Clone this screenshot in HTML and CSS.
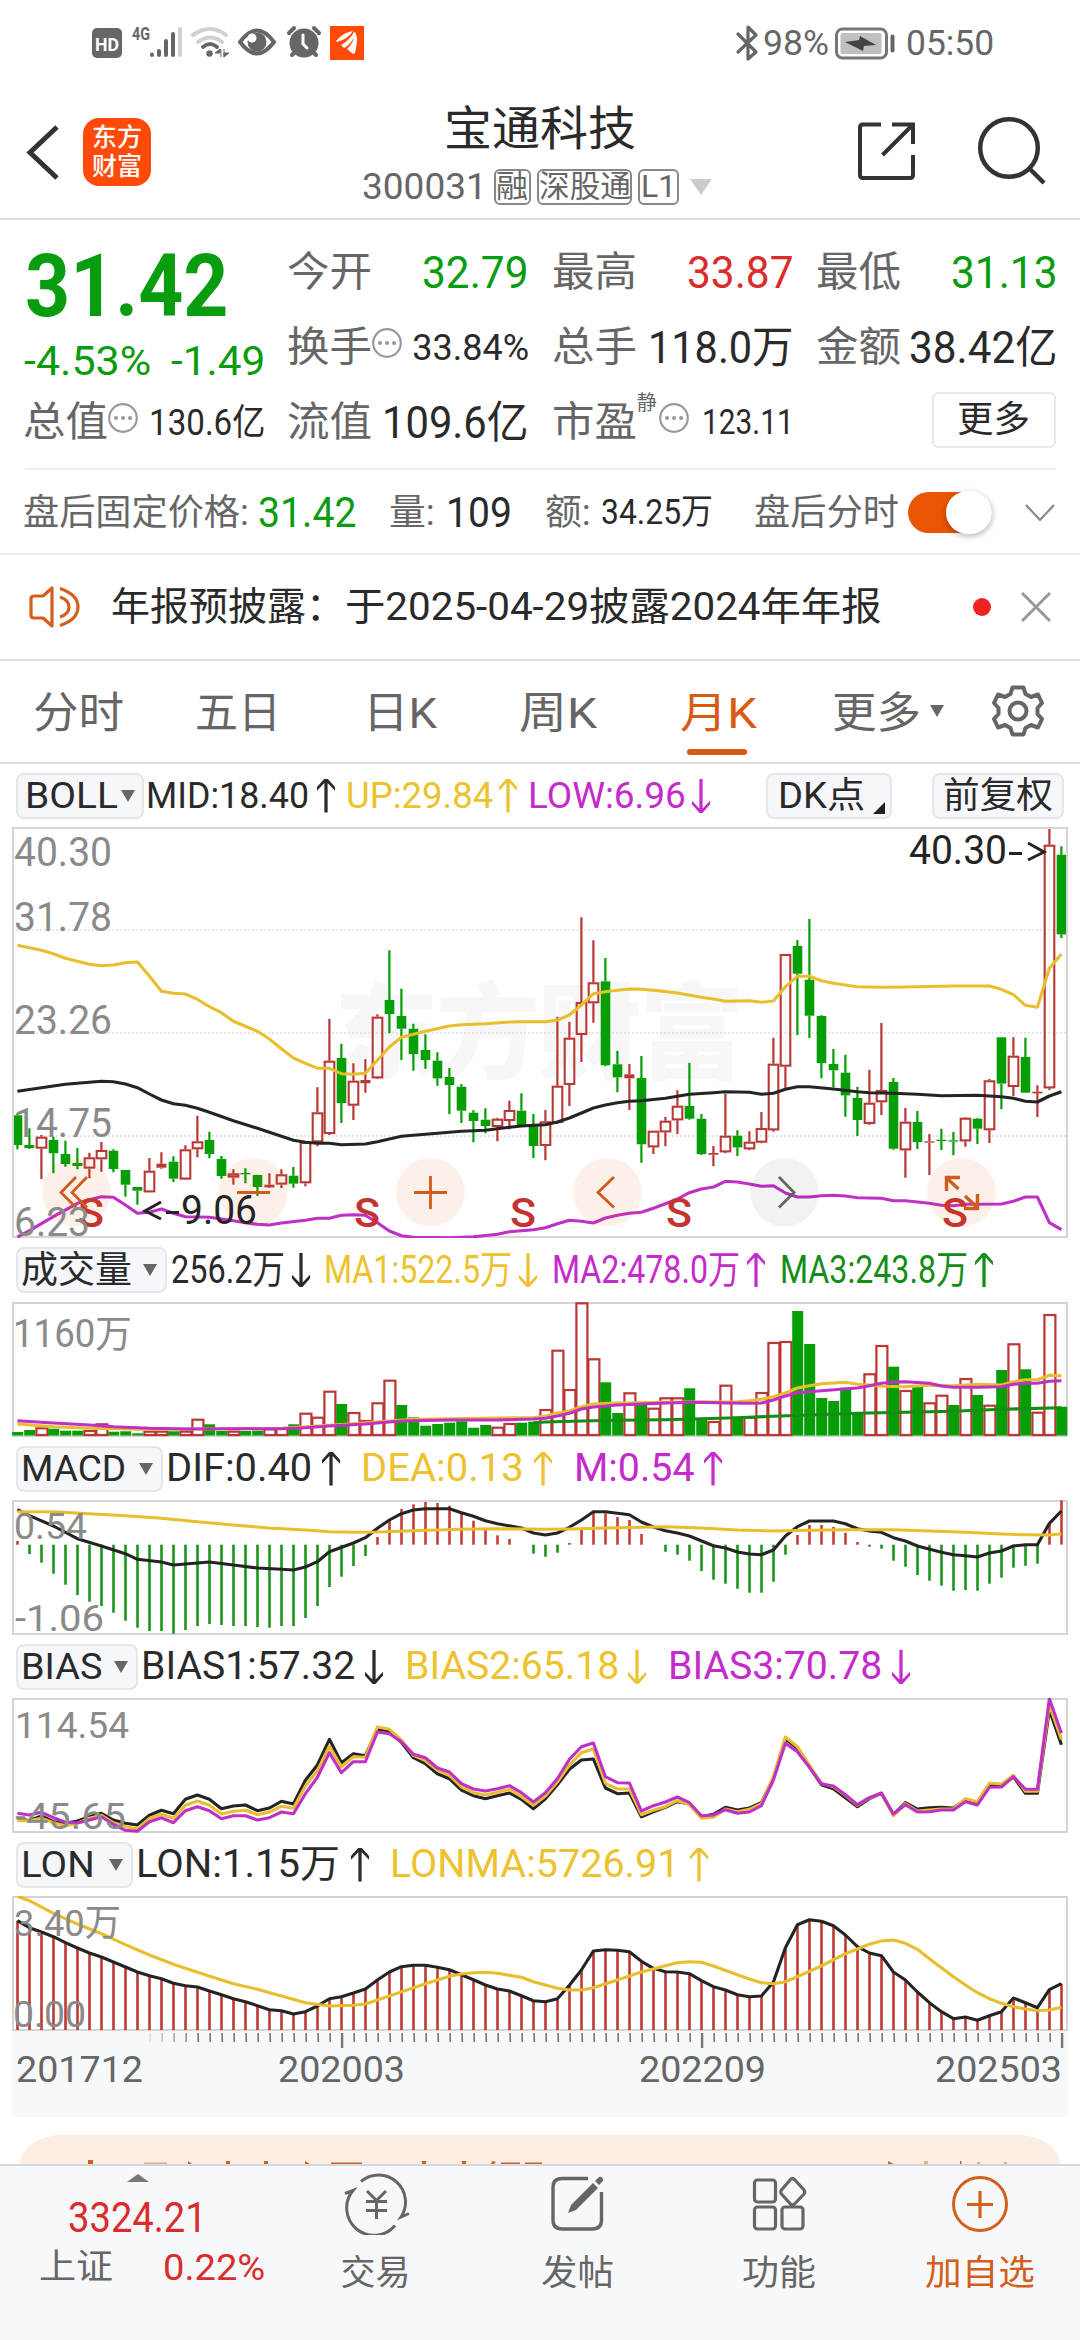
FILE: index.html
```html
<!DOCTYPE html>
<html lang="zh-CN">
<head>
<meta charset="utf-8">
<title>宝通科技 300031</title>
<link rel="stylesheet" href="styles.css">
</head>
<body>
<div class="screen">
  <header class="status">
    <svg class="status-left" width="280" height="46" viewBox="88 20 280 46">
      <rect x="92" y="28" width="30" height="30" rx="5" fill="#666"/>
      <text x="95" y="50.500" font-size="19" font-weight="700" fill="#fff" textLength="24" lengthAdjust="spacingAndGlyphs">HD</text>
      <text x="132" y="40" font-size="18" font-weight="700" fill="#666" textLength="18" lengthAdjust="spacingAndGlyphs">4G</text>
      <g stroke="#666" stroke-width="4" stroke-linecap="round"><path d="M152 54.500v.5M159 51v4M166 41v14M173 34v21"/><path d="M180 29v26" stroke="#d0d0d0"/></g>
      <g fill="none" stroke-width="4" stroke-linecap="round"><path d="M193 35q17-12 33 0M198 42q12-9 24 0" stroke="#d0d0d0"/><path d="M203 47q7-6 14 0" stroke="#666"/></g>
      <circle cx="209.500" cy="53.500" r="3.200" fill="#666"/><path d="M221 49v8M215 53l5-4v4zM224 49v8M224 53h5l-5 4z" fill="#666" stroke="#666" stroke-width="1"/>
      <path d="M240 42q17-23 34 0q-17 23-34 0z" fill="none" stroke="#666" stroke-width="4" stroke-linejoin="round"/>
      <circle cx="257" cy="42" r="9.500" fill="#666"/><circle cx="252" cy="38" r="4.500" fill="#fff"/>
      <g fill="none" stroke="#666" stroke-width="4" stroke-linecap="round"><circle cx="304" cy="43" r="12.500" fill="#666"/><path d="M289 33l5-5M319 33l-5-5M292 55l3-3M316 55l-3-3"/><path d="M303 35v9l4 4" stroke="#fff" stroke-width="3"/></g>
      <rect x="330" y="26" width="34" height="34" fill="#ff4a0a"/>
      <path d="M336 41q8-9 17-10q-5 8-16 11zM341 45q9-5 13-13l2 1q-4 11-12 15zM347 49q6-5 8-15q4 1 0 19l-2 1z" fill="#fff"/>
    </svg>
    <div class="status-right">
      <svg width="24" height="38" viewBox="735 23 24 38"><path d="M738 33l18 18-8 7V26l8 8-18 17" fill="none" stroke="#666" stroke-width="3.200" stroke-linejoin="round" stroke-linecap="round"/></svg>
      <span class="fit s35" data-w="62" data-g="6">98%</span>
      <svg class="battery" width="62" height="34" viewBox="834 25 62 34"><rect x="836.500" y="28" width="50" height="29" rx="6" fill="#fff" stroke="#777" stroke-width="3"/><rect x="840.500" y="32" width="41" height="21" rx="2" fill="#c0c0c0"/><path d="M845 41l14-2 1-4 16 9-12 1-1 5z" fill="#444"/><rect x="890.500" y="33.500" width="4" height="18" rx="2" fill="#666"/></svg>
      <span class="fit s35" data-w="84" data-g="12">05:50</span>
    </div>
  </header>

  <nav class="nav">
    <svg class="back" width="36" height="60" viewBox="25 122 36 60"><path d="M57 127L30 152.500 57 178" fill="none" stroke="#333" stroke-width="5"/></svg>
    <div class="logo"><span>东方</span><span>财富</span></div>
    <div class="heading">
      <div class="name"><span class="fit s47" data-w="188">宝通科技</span></div>
      <div class="code"><span class="fit s37" data-w="121">300031</span><span class="tag t1"><span class="fit s31" data-w="28">融</span></span><span class="tag t2"><span class="fit s31" data-w="88">深股通</span></span><span class="tag t3"><span class="fit s31" data-w="31">L1</span></span><svg width="22" height="16"><path d="M0 0h22l-11 16z" fill="#ccc"/></svg></div>
    </div>
    <svg class="share" width="62" height="62" viewBox="856 122 62 62"><path d="M881 125.500H863q-3 0-3 3V176q0 3 3 3H910q3 0 3-3V156M892 125.500H913V145M912 126.500L882.500 156" fill="none" stroke="#333" stroke-width="4"/></svg>
    <svg class="search" width="74" height="74" viewBox="976 116 74 74"><circle cx="1009" cy="149" r="28.800" fill="none" stroke="#333" stroke-width="4.500"/><path d="M1029 169l15 15" stroke="#333" stroke-width="4.500"/></svg>
  </nav>

  <section class="quote">
    <div class="last green"><div class="price"><span class="fit s88" data-w="199">31.42</span></div>
      <div class="change"><span class="fit s40" data-w="123">-4.53%</span><span class="fit s40" data-w="90">-1.49</span></div></div>
    <div class="cell"><span class="fit s40 lab" data-w="81">今开</span><span class="fit s44 green" data-w="103">32.79</span></div>
    <div class="cell"><span class="fit s40 lab" data-w="81">最高</span><span class="fit s44 red" data-w="103">33.87</span></div>
    <div class="cell"><span class="fit s40 lab" data-w="81">最低</span><span class="fit s44 green" data-w="103">31.13</span></div>
    <div class="cell"><span class="fit s40 lab" data-w="81">换手</span><svg class="info" viewBox="0 0 30 30"><circle cx="15" cy="15" r="13.800"/><path d="M8 15h.1M15 15h.1M22 15h.1"/></svg><span class="fit s36" data-w="113">33.84%</span></div>
    <div class="cell"><span class="fit s40 lab" data-w="81">总手</span><span class="fit s42" data-w="142">118.0万</span></div>
    <div class="cell"><span class="fit s40 lab" data-w="81">金额</span><span class="fit s42" data-w="145">38.42亿</span></div>
    <div class="cell"><span class="fit s40 lab" data-w="81">总值</span><svg class="info" viewBox="0 0 30 30"><circle cx="15" cy="15" r="13.800"/><path d="M8 15h.1M15 15h.1M22 15h.1"/></svg><span class="fit s36" data-w="112">130.6亿</span></div>
    <div class="cell"><span class="fit s40 lab" data-w="81">流值</span><span class="fit s42" data-w="143">109.6亿</span></div>
    <div class="cell"><span class="fit s40 lab" data-w="81">市盈</span><span class="sup">静</span><svg class="info" viewBox="0 0 30 30"><circle cx="15" cy="15" r="13.800"/><path d="M8 15h.1M15 15h.1M22 15h.1"/></svg><span class="fit s34" data-w="88">123.11</span></div>
    <div class="cell end"><span class="more"><span class="fit s36" data-w="69">更多</span></span></div>
  </section>

  <section class="after">
    <span class="fit s36 lab" data-w="222">盘后固定价格:</span><span class="fit s41 green" data-w="95" data-g="13">31.42</span>
    <span class="fit s36 lab" data-w="42" data-g="36">量:</span><span class="fit s41" data-w="62" data-g="15">109</span>
    <span class="fit s36 lab" data-w="42" data-g="37">额:</span><span class="fit s35" data-w="108" data-g="14">34.25万</span>
    <span class="fit s36 lab" data-w="141" data-g="45">盘后分时</span>
    <span class="toggle"><i></i></span>
    <svg class="chev" width="30" height="20"><path d="M1 2l14 15L29 2" fill="none" stroke="#888" stroke-width="2.200"/></svg>
  </section>

  <section class="notice">
    <svg width="54" height="46" viewBox="28 583 54 46"><g fill="none" stroke="#d35f1b" stroke-width="3.200" stroke-linejoin="round"><path d="M52 587v38L43 617H34q-3 0-3-3V598q0-3 3-3H43z"/><path d="M60 587.500q18 6 18 18.500t-18 18.500M60 596q9 3 9 10t-9 10"/></g></svg>
    <span class="fit s39" data-w="230" data-g="31">年报预披露：</span><span class="fit s39" data-w="533" data-g="4">于2025-04-29披露2024年年报</span>
    <i class="dot"></i>
    <svg class="close" width="30" height="30"><path d="M1 1l28 28M29 1L1 29" stroke="#999" stroke-width="3"/></svg>
  </section>

  <section class="tabs">
    <span class="fit s43" data-w="87">分时</span><span class="fit s43" data-w="82" data-g="75">五日</span><span class="fit s43" data-w="70" data-g="86">日K</span><span class="fit s43" data-w="74" data-g="86">周K</span>
    <span class="tab-on"><span class="fit s43" data-w="73">月K</span><i></i></span>
    <span class="fit s43" data-w="85" data-g="79">更多</span><svg class="tab-tri" width="14" height="12"><path d="M0 0h14L7 12z" fill="#666"/></svg>
    <svg class="gear" width="52" height="52" viewBox="-26 -26 52 52"><path d="M-5.500-23.500H5.500L7.500-17 13-14 20-16.500 24-8 19.500-3V3L24 8 20 16.500 13 14 7.500 17 5.500 23.500H-5.500L-7.500 17-13 14-20 16.500-24 8-19.500 3V-3L-24-8-20-16.500-13-14-7.500-17Z" fill="none" stroke="#666" stroke-width="4" stroke-linejoin="round"/><circle r="8.500" fill="none" stroke="#666" stroke-width="4"/></svg>
  </section>

  <section class="legend">
    <span class="pick p-boll"><span class="fit s36" data-w="89">BOLL</span><i class="tri"></i></span>
    <span class="fit s36" data-w="159" data-g="4">MID:18.40</span><i class="arr" data-g="10"></i>
    <span class="fit s36 yel" data-w="143" data-g="13">UP:29.84</span><i class="arr yel" data-g="8"></i>
    <span class="fit s36 pur" data-w="154" data-g="13">LOW:6.96</span><i class="arr down pur" data-g="8"></i>
    <span class="pick p-dk"><span class="fit s36" data-w="83">DK点</span><i class="corner"></i></span>
    <span class="pick p-fq"><span class="fit s36" data-w="106">前复权</span></span>
  </section>
  <svg class="chart main" id="kline" viewBox="12 827 1056 411"></svg>

  <section class="legend tall">
    <span class="pick p-vol"><span class="fit s37" data-w="107">成交量</span><i class="tri"></i></span>
    <span class="fit s38" data-w="110" data-g="6">256.2万</span><i class="arr down" data-g="9"></i>
    <span class="fit s38 yel" data-w="184" data-g="16">MA1:522.5万</span><i class="arr down yel" data-g="9"></i>
    <span class="fit s38 pur" data-w="184" data-g="17">MA2:478.0万</span><i class="arr pur" data-g="9"></i>
    <span class="fit s38 dgreen" data-w="184" data-g="17">MA3:243.8万</span><i class="arr dgreen" data-g="9"></i>
  </section>
  <svg class="chart" id="volume" viewBox="12 1302 1056 135"></svg>

  <section class="legend">
    <span class="pick p-macd"><span class="fit s36" data-w="101">MACD</span><i class="tri"></i></span>
    <span class="fit s38" data-w="142" data-g="5">DIF:0.40</span><i class="arr" data-g="12"></i>
    <span class="fit s38 yel" data-w="159" data-g="23">DEA:0.13</span><i class="arr yel" data-g="12"></i>
    <span class="fit s38 pur" data-w="117" data-g="24">M:0.54</span><i class="arr pur" data-g="11"></i>
  </section>
  <svg class="chart" id="macd" viewBox="12 1500 1056 135"></svg>

  <section class="legend">
    <span class="pick p-bias"><span class="fit s36" data-w="77">BIAS</span><i class="tri"></i></span>
    <span class="fit s38" data-w="210" data-g="5">BIAS1:57.32</span><i class="arr down" data-g="12"></i>
    <span class="fit s38 yel" data-w="210" data-g="24">BIAS2:65.18</span><i class="arr down yel" data-g="11"></i>
    <span class="fit s38 pur" data-w="210" data-g="24">BIAS3:70.78</span><i class="arr down pur" data-g="12"></i>
  </section>
  <svg class="chart" id="bias" viewBox="12 1698 1056 135"></svg>

  <section class="legend">
    <span class="pick p-lon"><span class="fit s36" data-w="70">LON</span><i class="tri"></i></span>
    <span class="fit s38" data-w="200" data-g="5">LON:1.15万</span><i class="arr" data-g="13"></i>
    <span class="fit s38 yel" data-w="286" data-g="23">LONMA:5726.91</span><i class="arr yel" data-g="12"></i>
  </section>
  <svg class="chart" id="lon" viewBox="12 1896 1056 135"></svg>
  <svg class="axis" id="axis" viewBox="12 2031 1056 86"></svg>

  <div class="banner"><svg width="1040" height="29" viewBox="20 2135 1040 29" fill="#c8622a"><path d="M88 2160h5v4h-5zM188 2161l4 3h-4zM226 2161h4v3h-4zM264 2161h4v3h-4zM305 2161l5 3h-5zM331 2162.500h31v1.500h-31zM422 2161h4v3h-4zM462 2161h4v3h-4zM492 2161l4 1-2 2h-3zM501 2162.500h19v1.500h-19zM525 2162.500h17v1.500h-17zM888 2161l6 3h-6zM960 2161h1.500v3h-1.500z"/><path d="M144 2162.500h23v1.500h-23zM924 2161h4v3h-4zM977 2162h3v2h-3zM1004 2162h3v2h-3z" opacity=".45"/></svg></div>

  <footer class="tabbar">
    <div class="index"><svg width="22" height="8"><path d="M11 0l11 8H0z" fill="#777"/></svg>
      <div class="idx1 red"><span class="fit s41" data-w="135">3324.21</span></div>
      <div class="idx2"><span class="fit s35 lab" data-w="70">上证</span><span class="fit s37 red" data-w="98">0.22%</span></div></div>
    <div class="item"><svg width="70" height="62" viewBox="340 2173 70 62"><g fill="none" stroke="#666" stroke-width="3"><path d="M360 2181.500A27 27 0 0 1 400 2217l8-3.500M394 2225.500A27 27 0 0 1 352 2190.500l-8 3"/><path d="M366 2191l9.500 9.500L385 2191M365 2201.500h21M365 2210.500h21M375.500 2200v19"/></g></svg><span class="fit s35" data-w="66">交易</span></div>
    <div class="item"><svg width="62" height="62" viewBox="545 2173 62 62"><path d="M586 2178.500H560q-9 0-9 9V2220q0 9 9 9H590.500q9 0 9-9V2192" fill="none" stroke="#666" stroke-width="3.400"/><path d="M566 2213l3-8L591 2183l5 5-22 22zM593 2181l4-4q4-1 4 4l-4 4z" fill="#666"/></svg><span class="fit s35" data-w="69">发帖</span></div>
    <div class="item"><svg width="62" height="62" viewBox="747 2173 62 62"><g fill="none" stroke="#666" stroke-width="3.200"><rect x="753.500" y="2180" width="21" height="22" rx="3"/><rect x="753.500" y="2207" width="21" height="22" rx="3"/><rect x="781" y="2207" width="21" height="22" rx="3"/><path d="M789.500 2179.500q2-2 4 0l9.500 10.500q1.500 2 0 4l-9.500 10q-2 2-4 0L780.500 2194q-1.500-2 0-4z"/></g></svg><span class="fit s35" data-w="70">功能</span></div>
    <div class="item orange"><svg width="62" height="62" viewBox="948 2173 62 62"><circle cx="979" cy="2204" r="26.500" fill="none" stroke="#d35f1b" stroke-width="3"/><path d="M966 2204.500h26M979 2191v27" stroke="#d35f1b" stroke-width="3.200"/></svg><span class="fit s35" data-w="106">加自选</span></div>
  </footer>
</div>
<script src="charts.js"></script>
</body>
</html>
```
FILE: styles.css
```css
* { box-sizing: border-box; }
body { margin: 0; background: #fff; color: #2a2a2a; font-family: Roboto, "Noto Sans CJK SC", sans-serif; }
i { font-style: normal; }
svg { display: block; flex: none; }
svg text { font-family: Roboto, "Noto Sans CJK SC", sans-serif; }
.screen { width: 1080px; height: 2340px; overflow: hidden; display: flex; flex-direction: column; }
.screen > * { flex: none; }

.fit { display: block; flex: none; white-space: nowrap; line-height: 1; }
.fit b { display: inline-block; font-weight: inherit; transform-origin: 0 50%; white-space: nowrap; }
.s31 { font-size: 31px; } .s34 { font-size: 35px; } .s35 { font-size: 35px; } .s36 { font-size: 36px; }
.s37 { font-size: 37px; } .s38 { font-size: 39px; } .s39 { font-size: 39px; } .s40 { font-size: 41px; }
.s41 { font-size: 42px; } .s42 { font-size: 44px; } .s43 { font-size: 43px; } .s44 { font-size: 44px; }
.s47 { font-size: 47px; } .s88 { font-size: 88px; }

.green { color: #0a9c0f; } .dgreen { color: #158c15; } .red { color: #d92d2d; }
.yel { color: #ecc22e; } .pur { color: #c52bcb; } .orange { color: #d35f1b; } .lab { color: #666; }

.status { height: 80px; display: flex; align-items: center; justify-content: space-between; padding: 6px 86px 0 88px; color: #666; }
.status-left { margin-top: 0; }
.status-right { display: flex; align-items: center; width: 259px; }
.battery { margin-left: 7px; }

.nav { height: 140px; border-bottom: 2px solid #ddd; display: flex; align-items: center; padding: 6px 30px 0 25px; }
.logo { width: 68px; height: 68px; margin-left: 22px; border-radius: 16px; background: #ff4a0a; color: #fff; display: flex; flex-direction: column; align-items: center; justify-content: center; font-size: 25px; line-height: 29px; font-weight: 500; }
.heading { margin-left: 213px; width: 348px; display: flex; flex-direction: column; }
.name { padding-left: 82px; height: 56px; display: flex; align-items: center; margin-top: 13px; }
.code { display: flex; align-items: center; color: #666; height: 60px; }
.tag { height: 36px; border: 2px solid #888; border-radius: 6px; display: flex; align-items: center; justify-content: center; }
.t1 { width: 37px; margin-left: 9px; } .t2 { width: 96px; margin-left: 6px; } .t3 { width: 41px; margin: 0 11px 0 6px; }
.share { margin-left: 144px; }
.search { margin-left: 58px; }

.quote { margin: 0 24px 0 25px; height: 250px; padding-top: 15px; border-bottom: 2px solid #eee; display: grid; grid-template-columns: repeat(4, 238px); grid-template-rows: repeat(3, 75px); justify-content: space-between; }
.last { grid-row: span 2; }
.price { height: 102px; display: flex; align-items: center; font-weight: 700; padding-left: 2px; }
.change { height: 48px; display: flex; align-items: center; justify-content: space-between; padding-left: 1px; }
.cell { display: flex; align-items: center; justify-content: space-between; }
.cell.end { justify-content: flex-end; }
.info { width: 30px; height: 30px; margin: -9px auto 0 2px; fill: none; stroke: #999; stroke-width: 2.2; stroke-linecap: round; }
.info path { stroke-width: 4; }
.sup { font-size: 20px; line-height: 20px; color: #666; margin: -40px 0 0 2px; }
.more { width: 124px; height: 56px; border: 2px solid #e6e8ea; border-radius: 6px; display: flex; align-items: center; justify-content: center; margin-top: -5px; }

.after { height: 85px; padding-top: 2px; border-bottom: 2px solid #eee; padding-left: 25px; display: flex; align-items: center; }
.toggle { width: 84px; height: 41px; margin-left: 11px; border-radius: 21px; background: #ea5504; display: flex; justify-content: flex-end; align-items: center; }
.toggle i { width: 46px; height: 43px; border-radius: 22px; background: #fff; box-shadow: 0 2px 6px rgba(0,0,0,.3); }
.chev { margin-left: 33px; }
.notice { height: 106px; border-bottom: 2px solid #ddd; padding-left: 28px; display: flex; align-items: center; }
.dot { width: 18px; height: 18px; border-radius: 9px; background: #f02222; margin-left: 93px; }
.close { margin-left: 30px; }

.tabs { height: 103px; padding-top: 4px; border-bottom: 2px solid #ddd; padding-left: 35px; display: flex; align-items: center; color: #666; }
.tab-on { margin-left: 87px; position: relative; color: #d95a12; }
.tab-on i { position: absolute; left: 5px; top: 57px; width: 60px; height: 6px; border-radius: 3px; background: #d95a12; }
.tab-tri { margin: -5px 0 0 11px; }
.gear { margin-left: 48px; margin-top: -5px; }

.legend { height: 63px; padding-left: 16px; display: flex; align-items: center; }
.legend.tall { height: 64px; }
.pick { height: 46px; border: 2px solid #e4e6e9; border-radius: 8px; background: #f6f7fa; display: flex; align-items: center; padding-left: 5px; }
.tri { margin-left: auto; margin-right: 8px; border: 7px solid transparent; border-top: 12px solid #666; border-bottom: 0; }
.p-boll { width: 128px; padding-left: 9px; } .p-vol { width: 151px; } .p-macd { width: 147px; } .p-bias { width: 122px; } .p-lon { width: 117px; }
.p-boll .tri { margin-right: 7px; }
.p-dk { width: 126px; margin-left: 56px; padding-left: 12px; } .p-fq { width: 132px; margin-left: 40px; padding-left: 11px; }
.corner { margin: 24px 5px 0 auto; border-style: solid; border-width: 0 0 12px 12px; border-color: transparent transparent #222 transparent; }
.arr { width: 18px; height: 34px; background: currentColor; clip-path: polygon(42% 0, 58% 0, 100% 25%, 100% 36%, 59% 13%, 59% 100%, 41% 100%, 41% 13%, 0 36%, 0 25%); }
.arr.down { transform: scaleY(-1); }

.chart { width: 1056px; height: 135px; margin-left: 12px; }
.chart.main { height: 411px; }
.axis { width: 1056px; height: 86px; margin-left: 12px; background: #f7f8fa; }

.banner { height: 29px; margin: 18px 20px 0; width: 1040px; overflow: hidden; background: #fcede3; border-radius: 42px 42px 0 0 / 29px 29px 0 0; }
.tabbar { height: 176px; border-top: 2px solid #d5d7da; background: #f7f8fa; display: grid; grid-template-columns: 274px 203px 201px 201px 201px; color: #666; }
.index { padding-top: 8px; }
.index svg { margin-left: 127px; }
.idx1 { padding: 2px 0 0 70px; height: 69px; display: flex; align-items: center; }
.idx2 { padding: 0 11px 0 41px; height: 32px; display: flex; align-items: center; justify-content: space-between; }
.item { padding-top: 7px; display: flex; flex-direction: column; align-items: center; gap: 21px; }
.item.orange { color: #d35f1b; }
```
FILE: charts.js
```js
document.querySelectorAll('[data-g]').forEach(function (el) { el.style.marginLeft = el.dataset.g + 'px'; });
document.querySelectorAll('.fit').forEach(function (el) {
  var b = document.createElement('b');
  b.textContent = el.textContent;
  el.textContent = '';
  el.appendChild(b);
  var w = +el.dataset.w, k = (w + 4) / b.offsetWidth;
  el.style.width = w + 'px';
  b.style.transform = 'translateX(-2px) scaleX(' + k + ')';
});

var RED = '#b93835', GREEN = '#059f05', YEL = '#e9be2e', PUR = '#c02fc6', BLK = '#242424';
function X(i) { return 17.4 + 12 * i; }
function f(n) { return n.toFixed(1); }
// "i:y" pairs, y in thirds of a pixel below base
function pts(s, base) {
  return s.split(',').map(function (p, n) {
    var a = p.split(':');
    return a.length > 1 ? [+a[0], base + a[1] / 3] : [n, base + a[0] / 3];
  });
}
function line(s, base, c) {
  return '<polyline fill="none" stroke-linejoin="round" stroke-width="3.1" stroke="' + c + '" points="' +
    pts(s, base).map(function (p) { return f(X(p[0])) + ',' + f(p[1]); }).join(' ') + '"/>';
}
function rect(x, y, w, h, a) { return '<rect x="' + f(x) + '" y="' + f(y) + '" width="' + f(w) + '" height="' + f(Math.max(h, 0)) + '" ' + a + '/>'; }
function text(s, x, y, w, c, size, extra) {
  return '<text x="' + (x - 2) + '" y="' + y + '" fill="' + c + '" font-size="' + (size || 40) + '" textLength="' + (w + 4) + '" lengthAdjust="spacingAndGlyphs" ' + (extra || '') + '>' + s + '</text>';
}
function frame(y, h) { return rect(13, y + 1, 1054, h - 2, 'fill="none" stroke="#d4d4d4" stroke-width="2"'); }
function put(id, s) { document.getElementById(id).innerHTML = s; }

// kind, high, body top, body bottom, low
var K = 'G880 886 975 988,G925 975 984 987,R945 950 986 1077,G950 960 1000 1060,G962 1002 1032 1040,G984 1029 1038 1048,R998 1012 1046 1075,R966 990 1018 1055,G988 992 1047 1057,G1050 1050 1094 1130,G1101 1101 1112 1154,R1014 1052 1117 1117,R997 1031 1043 1046,G1009 1025 1076 1086,R976 988 1079 1080,R887 964 988 1012,G935 960 1002 1015,G1008 1017 1068 1076,R1048 1060 1073 1094,G1045 1059 1063 1090,G1064 1065 1101 1128,R1060 1094 1102 1104,R1048 1063 1094 1104,G1041 1067 1091 1103,R966 966 1090 1099,R802 877 967 979,R597 722 942 945,G671 714 849 909,R730 782 857 900,R718 780 790 818,R583 590 775 777,G391 540 582 640,G506 588 626 720,G611 626 702 752,G643 690 720 746,G697 722 775 797,G744 771 795 883,G792 800 872 909,G871 878 903 967,G865 899 918 940,R893 896 921 964,R842 870 903 928,G820 872 916 916,G882 918 978 1014,R870 904 978 1021,R590 797 909 912,R606 653 795 858,R292 546 645 726,R361 487 550 608,G414 484 736 739,G692 733 772 817,R732 763 775 870,G708 774 973 1028,R932 932 982 1002,R891 902 937 979,R811 857 901 942,G729 858 896 899,G882 896 1002 1005,R978 999 1004 1039,R821 947 997 1000,G931 947 982 1008,R934 965 988 991,R876 924 968 970,R653 731 931 935,R402 402 740 805,G360 378 461 645,G297 479 587 654,G586 588 729 775,G687 732 751 802,G704 758 826 890,G800 834 900 948,R749 848 912 914,R609 810 847 885,G774 786 986 989,R864 905 991 1073,G873 906 966 987,R942 964 968 1065,G926 959 963 990,G936 961 965 1006,R892 893 964 980,G894 896 926 972,R777 781 931 969,G652 652 791 867,R652 707 801 828,G653 711 818 819,R796 815 820 891,R20 74 805 810,G79 104 343 354';
(function () {
  var s = '<g fill="#f7f7f7" font-weight="900" font-size="104"><text x="334" y="1071" textLength="410">东方财富</text></g>';
  [930, 1033, 1136].forEach(function (y) { s += '<path d="M12 ' + y + 'H1067" stroke="#ddd" stroke-width="1.5" stroke-dasharray="2 2"/>'; });
  K.split(',').forEach(function (k, i) {
    var v = k.slice(1).split(' ').map(function (n) { return 820 + n / 3; }), x = X(i), c = k[0] === 'R' ? RED : GREEN;
    s += '<path d="M' + f(x) + ' ' + f(v[0]) + 'V' + f(v[1]) + 'M' + f(x) + ' ' + f(v[2]) + 'V' + f(v[3]) + '" stroke="' + c + '" stroke-width="2.2"/>';
    if (v[2] - v[1] < 4.2) s += rect(x - 5, v[1], 10, v[2] - v[1], 'fill="' + c + '"');
    else if (c === RED) s += rect(x - 4.7, v[1] + 1, 9.6, v[2] - v[1] - 2, 'fill="none" stroke-width="2.1" stroke="' + c + '"');
    else s += rect(x - 4.7, v[1], 9.6, v[2] - v[1], 'fill="' + c + '"');
  });
  s += frame(827, 411);
  s += line('0:376,2:391,3:401,4:415,6:433,7:437,8:435,9:428,10:426,11:468,12:514,13:520,14:522,15:538,16:560,17:578,18:604,20:634,21:657,22:686,23:714,24:730,25:745,26:745,27:761,28:763,29:760,30:721,31:681,32:652,33:643,34:634,36:618,37:614,39:611,41:606,42:605,44:605,45:600,46:585,47:555,48:521,49:515,50:511,51:507,52:508,53:511,55:519,57:532,58:537,59:544,60:543,61:542,62:547,63:543,64:500,65:469,66:469,67:482,68:490,70:500,72:502,74:501,78:498,81:498,82:508,83:524,84:556,85:562,86:445,87:402', 820, YEL);
  s += line('0:814,2:803,4:793,7:784,8:785,9:792,10:803,11:822,12:840,13:851,14:856,15:865,16:877,18:902,20:925,23:961,24:967,25:970,26:970,27:974,29:972,30:965,31:957,32:949,34:943,37:934,39:931,41:922,42:918,43:916,44:914,45:906,46:894,47:879,48:864,49:855,50:848,51:844,52:842,54:835,56:823,58:818,59:815,61:817,62:823,63:820,64:808,65:800,66:800,68:807,70:815,71:818,73:820,75:823,77:827,80:826,82:830,83:835,84:844,85:846,86:828,87:815', 820, BLK);
  s += line('0:1251,1:1232,3:1190,5:1150,6:1139,7:1130,8:1132,9:1155,10:1180,11:1177,12:1167,13:1180,14:1190,16:1192,18:1202,19:1208,20:1213,21:1215,22:1209,24:1201,25:1195,26:1195,27:1186,28:1184,29:1186,30:1208,31:1233,32:1247,33:1252,36:1253,38:1250,40:1243,41:1235,43:1229,44:1223,45:1211,46:1201,47:1204,48:1209,49:1194,50:1186,51:1180,52:1177,53:1165,54:1151,55:1137,56:1118,57:1107,58:1101,59:1084,60:1086,61:1092,62:1099,63:1097,64:1119,65:1131,66:1131,67:1127,68:1126,69:1128,70:1133,72:1135,73:1142,74:1142,76:1150,77:1156,78:1157,79:1153,82:1152,83:1144,84:1131,85:1131,86:1208,87:1229', 820, PUR);
  [91, 367, 523, 679, 955].forEach(function (x) { s += text('S', x - 11, 1227, 22, '#c53330', 40, 'font-weight="500"'); });
  [76.4, 253.5, 430.4, 607.5, 784.5, 961.5].forEach(function (x, i) {
    s += '<circle cx="' + x + '" cy="1192.300" r="34.300" fill="' + (i === 4 ? '#000' : '#ea5504') + '" opacity="' + (i === 4 ? '.05' : '.085') + '"/>';
  });
  s += '<g fill="none" stroke="#cf5c1e" stroke-width="2.800"><path d="M76 1177L61 1192.500l15 15M87 1177L72 1192.500l15 15M237 1192.500h33M414 1192.500h33M430.500 1176v33M614 1177L598 1192.500l16 15"/><path d="M779 1177l15 15.500-15 15" stroke="#666"/><path d="M958.500 1189L946 1177.500M946.500 1191V1177.500H960M965 1196l13 12M964 1208.500H977.500V1194" stroke-width="3.400"/></g>';
  [['40.30', 866, 94], ['31.78', 931, 94], ['23.26', 1034, 94], ['14.75', 1137, 94], ['6.23', 1235.5, 72]].forEach(function (a) { s += text(a[0], 16, a[1], a[2], '#8a8a8a', 40); });
  s += text('40.30', 911, 864, 94, BLK, 40) + text('9.06', 183, 1224, 72, BLK, 40);
  s += '<path d="M1009 853.500h13M1028 843l16 9-16 8M166 1212.500h13M161 1202l-16 9 16 8" fill="none" stroke="#242424" stroke-width="3"/>';
  put('kline', s);
})();

(function () {
  var v = 'G576,G570,R562,G566,G572,G572,R570,R550,G575,G574,G580,R572,R572,G574,R572,R536,G553,G573,R572,G573,G572,R565,R562,G553,R518,R530,R452,G492,R516,R540,R487,R419,G495,G532,G557,G552,G548,G544,G563,G555,R560,R549,G548,G545,R507,R329,R447,R187,R355,G427,G519,R457,G495,R503,R472,R472,G445,G535,R543,R434,G530,R530,R456,R306,R303,G213,G312,G474,G483,G443,G519,R400,R315,G380,R450,G440,R487,R464,G495,R414,G465,R494,G390,R310,G388,R515,R222,G500';
  var s = frame(1302, 135);
  v.split(',').forEach(function (k, i) {
    var y = 1240 + k.slice(1) / 3, x = X(i);
    s += k[0] === 'R' ? rect(x - 5, y + 1, 11, 1434 - y, 'fill="#fff" stroke="' + RED + '" stroke-width="2.2"') : rect(x - 5.2, y, 11, 1435.500 - y, 'fill="' + GREEN + '"');
  });
  s += line('43:548,44:546,47:543,50:541,54:539,60:533,63:529,66:525,70:520,74:517,78:514,82:508,87:503', 1240, '#158c15');
  s += line('0:552,3:560,6:565,10:568,15:567,22:565,24:560,28:551,31:543,33:538,36:536,40:534,43:533,44:528,45:519,46:513,47:500,48:492,50:489,54:487,57:486,60:485,61:482,62:478,63:470,64:459,65:444,66:437,67:431,69:427,70:433,71:435,72:439,74:440,76:436,78:437,80:433,82:435,83:425,84:419,85:419,86:406,87:407', 1240, YEL);
  s += line('0:542,3:549,6:555,8:560,11:565,14:567,18:566,22:566,24:563,26:558,29:552,32:543,36:540,40:540,43:537,44:535,45:528,46:520,47:507,48:501,50:495,52:492,54:489,57:487,59:489,61:490,62:489,63:480,64:468,65:458,67:452,70:444,71:437,72:430,73:426,74:425,76:430,77:438,78:442,80:442,82:440,83:433,84:430,85:430,86:424,87:422', 1240, PUR);
  put('volume', s + text('1160万', 15, 1346.500, 115, '#8a8a8a', 38));
})();

(function () {
  var v = '903,942,968,1001,1034,1065,1085,1098,1118,1142,1163,1173,1173,1181,1170,1158,1152,1155,1158,1158,1161,1163,1158,1158,1134,1098,1041,1010,978,948,891,838,807,793,786,789,797,818,842,866,886,897,914,941,950,938,909,866,813,820,831,840,882,914,935,944,962,993,1019,1031,1046,1058,1058,1025,944,885,855,855,861,878,906,920,926,962,980,1005,1022,1037,1052,1050,1052,1031,1013,983,977,971,848,781';
  var s = frame(1500, 135), z = 1240 + 914 / 3;
  pts(v, 1240).forEach(function (p) { s += rect(X(p[0]) - 1.2, Math.min(z, p[1]), 2.6, Math.abs(p[1] - z), 'fill="' + (p[1] < z ? '#c83c36' : '#1a961a') + '"'); });
  s += line('0:809,1:827,3:858,5:896,7:918,9:941,10:958,12:966,13:975,14:972,16:966,18:975,20:984,22:988,23:990,24:981,25:965,26:935,28:909,29:893,30:865,31:840,32:821,33:810,34:806,36:806,37:818,38:829,39:842,40:851,42:864,43:879,44:885,45:879,46:862,47:840,48:815,49:815,50:820,51:824,52:846,53:861,54:872,55:879,56:888,58:917,59:924,60:936,61:942,62:944,63:930,64:888,65:860,66:843,68:843,69:851,70:866,71:873,72:877,73:893,74:903,75:918,77:937,78:944,79:947,80:951,81:939,82:933,83:918,84:914,85:914,86:850,87:813', 1240, BLK);
  s += line('0:815,3:815,6:821,9:827,12:835,15:845,18:855,21:864,24:870,26:875,28:877,30:876,33:872,37:868,40:866,44:868,46:867,50:863,54:860,57:864,60:870,63:873,66:871,69:869,73:869,76:873,79:877,82:882,84:884,86:885,87:881', 1240, YEL);
  put('macd', s + text('0.54', 16, 1539, 69, '#8a8a8a', 37) + text('-1.06', 17, 1630.500, 85, '#8a8a8a', 37));
})();

(function () {
  var b = '505,512,498,515,520,513,500,490,510,520,525,496,481,491,448,435,448,476,468,465,482,474,454,462,391,345,268,338,311,317,238,243,277,323,341,371,386,420,437,446,437,429,448,476,446,404,358,330,327,414,431,429,500,485,472,455,462,500,493,472,480,474,458,384,266,295,350,404,416,443,470,446,430,494,458,477,473,472,474,449,460,405,405,380,430,430,180,284';
  var y = '512,512,505,518,527,520,505,496,518,530,536,505,493,505,466,453,466,492,484,481,494,486,469,475,408,362,289,350,320,322,231,238,270,316,332,361,376,411,428,435,427,418,440,466,438,396,345,308,297,400,417,417,494,481,470,452,464,505,502,477,485,478,461,380,261,290,345,400,410,436,466,444,430,497,461,483,480,477,477,446,455,399,402,376,424,424,165,268';
  var p = '490,495,487,503,517,519,510,500,523,541,544,515,503,518,482,470,482,506,497,497,510,503,486,491,431,382,308,368,335,335,246,251,275,313,323,354,366,401,417,423,416,407,428,456,428,386,328,290,279,380,398,399,483,467,456,441,458,497,495,479,490,486,467,390,280,305,352,402,408,434,464,443,429,492,464,486,485,480,480,455,465,412,411,380,418,418,146,250';
  put('bias', frame(1698, 135) + line(b, 1650, BLK) + line(y, 1650, YEL) + line(p, 1650, PUR) +
    text('114.54', 17, 1738, 110, '#8a8a8a', 37) + text('-45.65', 17, 1828.500, 107, '#8a8a8a', 37));
})();

(function () {
  var b = '812,833,846,860,878,894,909,921,936,951,966,977,986,1000,1007,1011,1023,1034,1046,1055,1067,1079,1082,1092,1085,1068,1046,1040,1029,1017,990,966,950,946,946,952,959,974,989,1005,1017,1023,1037,1052,1055,1046,1006,960,903,899,901,905,934,955,965,966,971,992,1010,1020,1034,1040,1038,996,893,824,809,814,827,855,890,909,917,966,990,1026,1058,1085,1106,1101,1111,1097,1085,1044,1058,1073,1019,1001';
  var s = frame(1896, 135);
  pts(b, 1650).forEach(function (p) { s += rect(X(p[0]) - 1.2, p[1], 2.6, 2030 - p[1], 'fill="#bd3a37"'); });
  s += line(b, 1650, BLK);
  s += line('0:739,1:752,3:790,5:822,7:851,9:884,11:915,13:943,15:967,18:1001,20:1018,22:1038,24:1058,26:1068,28:1066,29:1062,31:1038,33:1013,35:990,36:979,37:972,38:968,39:967,40:970,42:982,43:995,45:1015,46:1020,47:1020,48:1013,50:990,52:966,54:947,55:938,56:935,57:937,58:948,60:974,61:987,62:998,63:1001,64:995,65:980,67:948,69:911,71:883,72:873,73:870,74:880,75:898,76:926,77:953,78:980,79:1005,80:1028,81:1046,82:1060,83:1070,84:1077,85:1082,86:1080,87:1072', 1650, YEL);
  put('lon', s + text('3.40万', 16, 1936, 103, '#8a8a8a', 37) + text('0.00', 15, 2026.500, 69, '#8a8a8a', 37));

  s = '';
  for (var i = 11; i < 88; i++) {
    var major = i === 27 || i === 57 || i === 87;
    s += rect(X(i) - (major ? 0.5 : 0), 2033, major ? 2.4 : 1.6, major ? 15 : 9, 'fill="#777" opacity="' + Math.min(1, (i - 10) / 5) + '"');
  }
  [['201712', 18], ['202003', 280], ['202209', 641], ['202503', 937]].forEach(function (a) { s += text(a[0], a[1], 2082, 123, '#666', 37); });
  put('axis', s);
})();
```
